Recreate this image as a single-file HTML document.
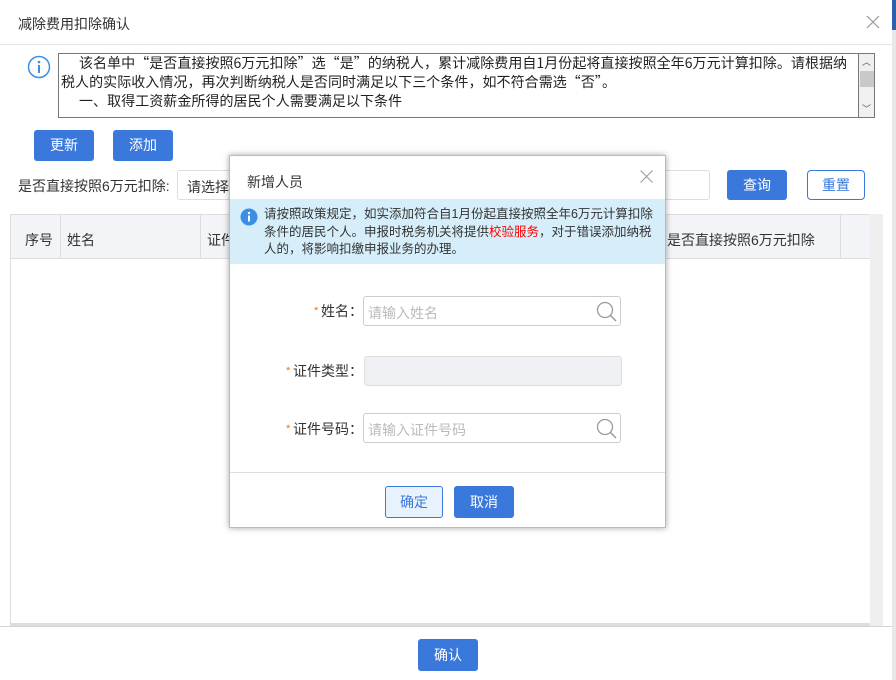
<!DOCTYPE html>
<html><head><meta charset="utf-8"><style>
*{box-sizing:border-box;margin:0;padding:0}
body{width:896px;height:680px;background:#fff;font-family:"Liberation Sans","Noto Sans CJK SC",sans-serif;font-size:14px;color:#333;position:relative;overflow:hidden}
.a{position:absolute}
.btn{position:absolute;background:#3a78dc;color:#fff;border-radius:3px;text-align:center;font-size:14px}
.lb{position:absolute;text-align:right;font-family:"Noto Sans CJK SC",sans-serif;font-size:14px;color:#333}
.lb span{color:#f08a24;font-size:12px;margin-right:2px}
</style></head><body>
<div class="a" style="left:892px;top:0;width:4px;height:680px;background:#e8e8e8"></div>
<div class="a" style="left:892px;top:0;width:4px;height:30px;background:#2d5fb0"></div>
<div class="a" style="left:18px;top:14px;font-size:14px;color:#333">减除费用扣除确认</div>
<svg class="a" style="left:866px;top:15px" width="14" height="14"><path d="M1 1L13 13M13 1L1 13" stroke="#999" stroke-width="1.2"/></svg>
<div class="a" style="left:0;top:44px;width:892px;height:1px;background:#e3e3e3"></div>
<svg class="a" style="left:27px;top:55px" width="24" height="24"><circle cx="12" cy="12" r="10.5" fill="none" stroke="#3a8ee6" stroke-width="1.5"/><circle cx="12" cy="7" r="1.3" fill="#3a8ee6"/><rect x="11" y="10" width="2" height="8" fill="#3a8ee6"/></svg>
<div class="a" style="left:58px;top:53px;width:817px;height:65px;border:1px solid #777;overflow:hidden">
<div style="position:absolute;left:0;top:0;width:800px;padding:0 0 0 2px;font-family:'Noto Sans CJK SC',sans-serif;font-size:14px;line-height:19px;color:#222;letter-spacing:0.05px">
<div style="text-indent:18px">该名单中“是否直接按照6万元扣除”选“是”的纳税人，累计减除费用自1月份起将直接按照全年6万元计算扣除。请根据纳税人的实际收入情况，再次判断纳税人是否同时满足以下三个条件，如不符合需选“否”。</div>
<div style="text-indent:18px">一、取得工资薪金所得的居民个人需要满足以下条件</div></div>
<div style="position:absolute;right:0;top:0;width:16px;height:63px;background:#f0f0f0;border-left:1px solid #777"><div style="position:absolute;top:17px;left:1px;width:14px;height:16px;background:#c9c9c9"></div><div style="position:absolute;top:1px;left:3px;font-size:9px;color:#555">︿</div><div style="position:absolute;bottom:2px;left:3px;font-size:9px;color:#555">﹀</div></div>
</div>
<div class="btn" style="left:34px;top:130px;width:60px;height:31px;line-height:31px">更新</div>
<div class="btn" style="left:113px;top:130px;width:60px;height:31px;line-height:31px">添加</div>
<div class="a" style="left:18px;top:176px">是否直接按照6万元扣除:</div>
<div class="a" style="left:177px;top:170px;width:533px;height:30px;border:1px solid #ddd;border-radius:3px;padding:6px 9px;color:#333">请选择</div>
<div class="btn" style="left:727px;top:170px;width:60px;height:30px;line-height:30px">查询</div>
<div class="a" style="left:807px;top:170px;width:58px;height:30px;line-height:28px;border:1px solid #3a78dc;border-radius:4px;color:#3a78dc;text-align:center">重置</div>
<div class="a" style="left:10px;top:214px;width:873px;height:412px;border:1px solid #ddd;background:#fff"></div>
<div class="a" style="left:870px;top:214px;width:13px;height:412px;background:#efefef"></div>
<div class="a" style="left:11px;top:215px;width:859px;height:44px;background:#f3f4f8;border-bottom:1px solid #ddd"></div>
<div class="a" style="left:60px;top:215px;width:1px;height:44px;background:#ddd"></div>
<div class="a" style="left:200px;top:215px;width:1px;height:44px;background:#ddd"></div>
<div class="a" style="left:840px;top:215px;width:1px;height:44px;background:#ddd"></div>
<div class="a" style="left:25px;top:230px">序号</div>
<div class="a" style="left:67px;top:230px">姓名</div>
<div class="a" style="left:207px;top:230px">证件</div>
<div class="a" style="left:667px;top:230px">是否直接按照6万元扣除</div>
<div class="a" style="left:11px;top:623px;width:859px;height:3px;background:#ddd"></div>
<div class="a" style="left:0;top:626px;width:892px;height:1px;background:#d5d5d5"></div>
<div class="btn" style="left:418px;top:639px;width:60px;height:32px;line-height:32px">确认</div>

<div class="a" style="left:229px;top:155px;width:437px;height:373px;background:#fff;box-shadow:0 0 6px rgba(0,0,0,.35);border:1px solid #bbb">
<div class="a" style="left:17px;top:16px;font-size:14px;color:#333">新增人员</div>
<svg class="a" style="left:410px;top:14px" width="13" height="13"><path d="M0.5 0.5L12.5 12.5M12.5 0.5L0.5 12.5" stroke="#999" stroke-width="1"/></svg>
<div class="a" style="left:0;top:43px;width:435px;height:65px;background:#d5eef9"></div>
<svg class="a" style="left:10px;top:52px" width="18" height="18"><circle cx="9" cy="9" r="8.5" fill="#3a8ee6"/><circle cx="9" cy="5" r="1.2" fill="#fff"/><rect x="8" y="7.5" width="2" height="6" fill="#fff"/></svg>
<div class="a" style="left:34px;top:50px;width:400px;font-size:12.5px;line-height:17.5px;color:#333">请按照政策规定，如实添加符合自1月份起直接按照全年6万元计算扣除条件的居民个人。申报时税务机关将提供<span style="color:#f00">校验服务</span>，对于错误添加纳税人的，将影响扣缴申报业务的办理。</div>
<div class="lb" style="left:20px;top:145px;width:113px"><span>*</span>姓名：</div>
<div class="a" style="left:133px;top:140px;width:258px;height:30px;border:1px solid #ccc;border-radius:3px;padding:6px 4px;color:#bbb">请输入姓名</div>
<div class="lb" style="left:20px;top:205px;width:113px"><span>*</span>证件类型：</div>
<div class="a" style="left:134px;top:200px;width:258px;height:30px;border:1px solid #ddd;border-radius:3px;background:#eff0f3"></div>
<div class="lb" style="left:20px;top:263px;width:113px"><span>*</span>证件号码：</div>
<div class="a" style="left:133px;top:257px;width:258px;height:30px;border:1px solid #ccc;border-radius:3px;padding:6px 4px;color:#bbb">请输入证件号码</div>
<svg class="a" style="left:366px;top:145px" width="22" height="22"><circle cx="9" cy="9" r="7.5" fill="none" stroke="#999" stroke-width="1.3"/><path d="M14.5 14.5L20 20" stroke="#999" stroke-width="1.5"/></svg>
<svg class="a" style="left:366px;top:262px" width="22" height="22"><circle cx="9" cy="9" r="7.5" fill="none" stroke="#999" stroke-width="1.3"/><path d="M14.5 14.5L20 20" stroke="#999" stroke-width="1.5"/></svg>
<div class="a" style="left:0;top:316px;width:435px;height:1px;background:#ddd"></div>
<div class="a" style="left:155px;top:330px;width:58px;height:32px;line-height:30px;border:1px solid #3a78dc;border-radius:3px;background:#e8f2fd;color:#3a78dc;text-align:center">确定</div>
<div class="btn" style="left:224px;top:330px;width:60px;height:32px;line-height:32px">取消</div>
</div>
</body></html>
